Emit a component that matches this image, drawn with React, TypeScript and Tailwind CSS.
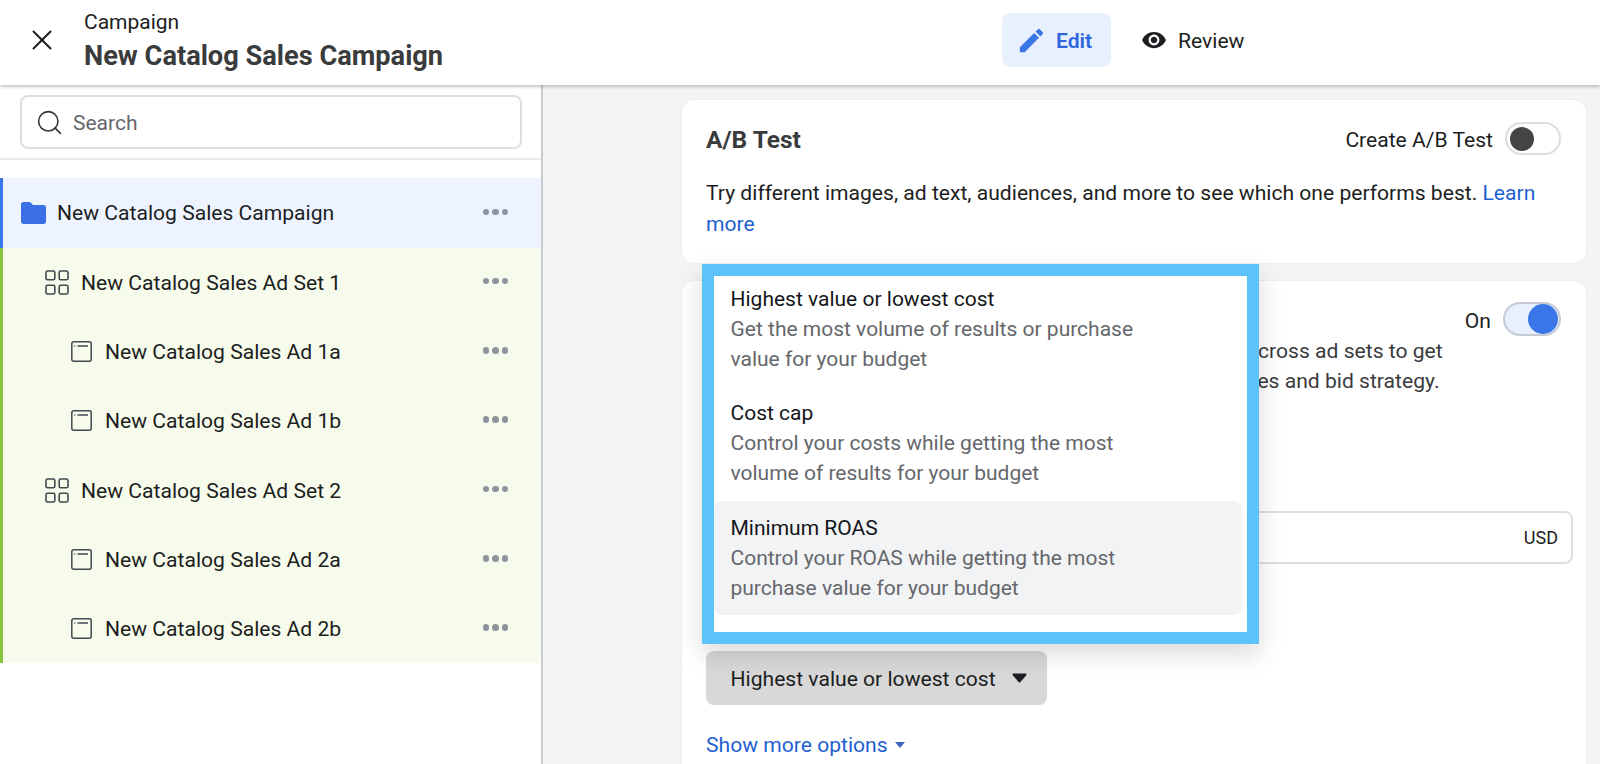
import { X, Search } from "lucide-react";
import { MdEdit, MdVisibility } from "react-icons/md";

const FONT = "font-['Roboto',sans-serif]";

function Dots() {
  return (
    <span className="flex items-center gap-[3px] ml-auto mr-[33px] mt-[-2px]">
      <span className="w-[6.5px] h-[6.5px] rounded-full bg-[#8d949e]" />
      <span className="w-[6.5px] h-[6.5px] rounded-full bg-[#8d949e]" />
      <span className="w-[6.5px] h-[6.5px] rounded-full bg-[#8d949e]" />
    </span>
  );
}

function FolderIcon() {
  return (
    <svg width="25" height="22" viewBox="0 0 25 22" className="shrink-0">
      <path d="M0 2.5C0 1 1 0 2.5 0H8c1 0 1.6.4 2.2 1L12 3h10.500C24 3 25 4 25 5.500V19.500C25 21 24 22 22.500 22H2.500C1 22 0 21 0 19.500Z" fill="#3a6fe6" />
    </svg>
  );
}

function AdSetIcon() {
  return (
    <svg width="24" height="25" viewBox="0 0 24 25" fill="none" stroke="#444950" strokeWidth="1.6" className="shrink-0">
      <rect x="1" y="1" width="8.800" height="8.800" rx="1.500" />
      <rect x="14.200" y="1" width="8.800" height="8.800" rx="1.500" />
      <rect x="1" y="15.200" width="8.800" height="8.800" rx="1.500" />
      <rect x="14.200" y="15.200" width="8.800" height="8.800" rx="1.500" />
    </svg>
  );
}

function AdIcon() {
  return (
    <svg width="21" height="21" viewBox="0 0 21 21" fill="none" stroke="#444950" strokeWidth="1.5" className="shrink-0">
      <rect x="0.800" y="0.800" width="19.400" height="19.400" rx="2" />
      <path d="M3.300 5h1M6.500 5h10.500" />
    </svg>
  );
}

const ROWS = [
  { label: "New Catalog Sales Ad Set 1", kind: "set" },
  { label: "New Catalog Sales Ad 1a", kind: "ad" },
  { label: "New Catalog Sales Ad 1b", kind: "ad" },
  { label: "New Catalog Sales Ad Set 2", kind: "set" },
  { label: "New Catalog Sales Ad 2a", kind: "ad" },
  { label: "New Catalog Sales Ad 2b", kind: "ad" },
];

const OPTIONS = [
  { title: "Highest value or lowest cost", lines: ["Get the most volume of results or purchase", "value for your budget"] },
  { title: "Cost cap", lines: ["Control your costs while getting the most", "volume of results for your budget"] },
  { title: "Minimum ROAS", lines: ["Control your ROAS while getting the most", "purchase value for your budget"], active: true },
];

function Sidebar() {
  return (
    <aside className="w-[543px] shrink-0 h-full bg-white border-r-2 border-[#c9ccd1]">
      <div className="h-[75px] px-5 pt-[10px] border-b-2 border-[#e9eaec]">
        <div className="h-[54px] w-[502px] rounded-lg border-2 border-[#dcdee1] flex items-center pl-[13px] gap-[9px]">
          <Search size={29} strokeWidth={1.300} className="text-[#333] shrink-0" />
          <span className="text-[21px] text-[#65676b] mt-[3px]">Search</span>
        </div>
      </div>
      <div className="mt-[18px]">
        <div className="h-[69.500px] bg-[#eef4ff] border-l-[3px] border-[#3a76e8] flex items-center pl-[18px] gap-[11px] text-[21.100px] text-[#1c1e21]">
          <FolderIcon />
          <span className="pt-[1px]">New Catalog Sales Campaign</span>
          <Dots />
        </div>
        {ROWS.map((r) => (
          <div
            key={r.label}
            className={`h-[69.300px] bg-[#f7fbec] border-l-[3px] border-[#84c440] flex items-center text-[21.100px] text-[#1c1e21] ${
              r.kind === "set" ? "pl-[42px] gap-[12px]" : "pl-[68px] gap-[13px]"
            }`}
          >
            {r.kind === "set" ? <AdSetIcon /> : <AdIcon />}
            <span className="pt-[1px]">{r.label}</span>
            <Dots />
          </div>
        ))}
      </div>
    </aside>
  );
}

function StrategyMenu() {
  return (
    <div className="absolute left-[20px] top-[-17px] w-[557px] h-[380px] bg-white border-[12px] border-[#5bc3f7] shadow-[0_10px_24px_rgba(0,0,0,0.15)] pr-[5px]">
      <div className="mt-[-4px]">
        {OPTIONS.map((o) => (
          <div
            key={o.title}
            className={`pl-[16.5px] h-[114.300px] pt-[12px] rounded-lg text-[21px] leading-[30px] ${o.active ? "bg-[#f2f3f5]" : ""}`}
          >
            <div className="text-[#14161a]">{o.title}</div>
            {o.lines.map((l) => (
              <div key={l} className="text-[#65676b]">{l}</div>
            ))}
          </div>
        ))}
      </div>
    </div>
  );
}

export default function App() {
  return (
    <div className={`${FONT} h-screen w-full overflow-hidden flex flex-col bg-[#f3f4f4]`}>
      <header className="relative z-10 h-[85px] shrink-0 bg-white shadow-[0_2px_3px_rgba(0,0,0,0.22)] flex items-center">
        <X size={34} strokeWidth={1.400} className="text-[#1c1e21] ml-[25px] mr-[25px] mt-[-6px]" />
        <div className="w-[918px] flex flex-col">
          <span className="text-[21px] leading-[30px] text-[#1c1e21] mt-[-4px]">Campaign</span>
          <span className="text-[27.200px] leading-[36px] font-bold text-[#3a3b3d] mt-[1px]">New Catalog Sales Campaign</span>
        </div>
        <div className="h-[54px] w-[109px] mt-[-5px] rounded-lg bg-[#e8f0fd] flex items-center pl-[14px] gap-[9px] text-[#2f66dd] text-[21.100px] font-semibold">
          <MdEdit size={31} color="#3a76e8" />
          <span className="pt-[1px]">Edit</span>
        </div>
        <div className="ml-[30px] mt-[-5px] flex items-center gap-[11px] text-[21.100px] text-[#1c1e21]">
          <MdVisibility size={26} />
          <span className="pt-[1px]">Review</span>
        </div>
      </header>

      <div className="flex flex-1 min-h-0">
        <Sidebar />
        <main className="flex-1 min-w-0 pl-[139px] pr-[14px] pt-[15px] text-[21.100px] text-[#1c1e21]">
          <section className="h-[163px] bg-white rounded-xl shadow-[0_0_2px_rgba(0,0,0,0.1)] px-[24px] pt-[24px]">
            <div className="flex items-center justify-between h-[32px]">
              <h2 className="text-[24.500px] font-bold text-[#3a3b3d]">A/B Test</h2>
              <div className="flex items-center gap-[12px] mr-[1px]">
                <span>Create A/B Test</span>
                <span className="w-[56px] h-[33px] mt-[-2px] rounded-full border-2 border-[#dcdee1] bg-white flex items-center pl-[3px]">
                  <span className="w-[24px] h-[24px] rounded-full bg-[#444]" />
                </span>
              </div>
            </div>
            <p className="mt-[22px] leading-[30.500px]">
              Try different images, ad text, audiences, and more to see which one performs best.{" "}
              <span className="text-[#1f5fd0]">Learn more</span>
            </p>
          </section>

          <section className="relative mt-[18px] h-[600px] bg-white rounded-t-xl shadow-[0_0_2px_rgba(0,0,0,0.1)] pl-[24px] pr-[13px] pt-[22px]">
            <div className="flex items-center justify-between h-[34px] pr-[11px]">
              <h2 className="text-[24.500px] font-bold text-[#3a3b3d]">Campaign budget optimization</h2>
              <div className="flex items-center gap-[12px] mr-[1px]">
                <span className="pt-[2px] ml-[2px]">On</span>
                <span className="w-[58px] h-[34px] mt-[-1px] rounded-full border-2 border-[#c5cbd5] bg-[#e8f0fd] flex items-center justify-end">
                  <span className="w-[30px] h-[30px] mr-[1px] rounded-full bg-[#3a76e8]" />
                </span>
              </div>
            </div>
            <p className="mt-[-1px] max-w-[750px] leading-[30px] text-[#3a3b3d]">
              Campaign budget optimization will distribute your budget across ad sets to get more results depending on
              your delivery optimization choices and bid strategy.
            </p>
            <div className="mt-[26px] h-[30px]">Campaign budget</div>
            <div className="mt-[59px] h-[53px] w-full rounded-lg border-2 border-[#dcdee1] flex items-center justify-end pr-[13px] text-[18px]">
              USD
            </div>
            <div className="mt-[54px] h-[30px] leading-[30px]">Campaign bid strategy</div>
            <div className="mt-[3px] h-[54px] w-[341px] rounded-lg bg-[#d8d8d8] flex items-center pl-[24.500px]">
              <span className="pt-[1px]">Highest value or lowest cost</span>
              <svg width="15" height="10" viewBox="0 0 15 10" className="ml-[16px]">
                <path d="M1.500 1.500h12L7.500 8.500Z" fill="#1c1e21" stroke="#1c1e21" strokeWidth="2" strokeLinejoin="round" />
              </svg>
            </div>
            <div className="mt-[25px] flex items-center gap-[7px] text-[#1f5fd0] leading-[30px]">
              <span>Show more options</span>
              <span className="w-0 h-0 border-x-[5px] border-t-[6px] border-x-transparent border-t-[#3f63c0]" />
            </div>
            <StrategyMenu />
          </section>
        </main>
      </div>
    </div>
  );
}
